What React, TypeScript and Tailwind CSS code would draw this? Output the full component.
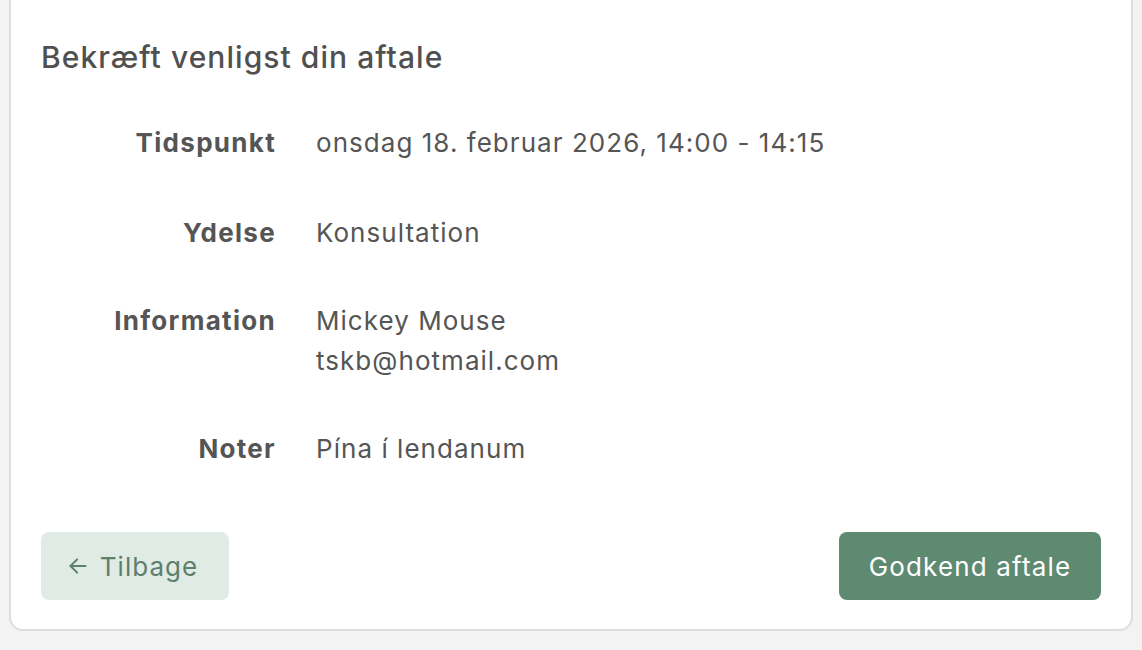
import React from "react";

const rows: { label: string; value: string[]; extra?: string }[] = [
  { label: "Tidspunkt", value: ["onsdag 18. februar 2026, 14:00 - 14:15"], extra: "mb-[2px]" },
  { label: "Ydelse", value: ["Konsultation"] },
  { label: "Information", value: ["Mickey Mouse", "tskb@hotmail.com"] },
  { label: "Noter", value: ["Pína í lendanum"] },
];

export default function App() {
  return (
    <div
      className="min-h-[650px] w-full bg-[#f3f3f3] px-[9px] pb-[19px]"
      style={{ fontFamily: "Inter, 'Noto Sans', sans-serif" }}
    >
      <div className="rounded-b-[14px] border-x-2 border-b-2 border-[#dedede] bg-white px-[30px] pt-[37px] pb-[29px]">
        <h1 className="text-[30px] leading-[40px] font-medium tracking-[0.035em] text-[#505050]">
          Bekræft venligst din aftale
        </h1>
        <div className="mt-[46px] flex flex-col gap-[48px]">
          {rows.map((r) => (
            <div key={r.label} className={`flex gap-[40px] ${r.extra ?? ""}`}>
              <div className="w-[235px] shrink-0 text-right text-[26px] leading-[40px] font-bold tracking-[0.05em] text-[#555555]">
                {r.label}
              </div>
              <div className="text-[26px] leading-[40px] tracking-[0.04em] text-[#555555]">
                {r.value.map((v) => (
                  <div key={v}>{v}</div>
                ))}
              </div>
            </div>
          ))}
        </div>
        <div className="mt-[63px] flex items-center justify-between">
          <button className="flex h-[68px] w-[188px] items-center justify-center gap-[12px] rounded-[8px] bg-[#e0ebe5] pr-[4px] text-[26px] tracking-[0.04em] text-[#5d7f6c]">
            <svg width="20" height="20" viewBox="0 0 24 24" fill="none" stroke="currentColor" strokeWidth="2.4" strokeLinecap="round" strokeLinejoin="round">
              <path d="M21 12H3" />
              <path d="M11 20l-8-8 8-8" />
            </svg>
            <span>Tilbage</span>
          </button>
          <button className="flex h-[68px] w-[262px] items-center justify-center rounded-[8px] bg-[#5f8a72] text-[26px] tracking-[0.045em] text-white">
            Godkend aftale
          </button>
        </div>
      </div>
    </div>
  );
}
